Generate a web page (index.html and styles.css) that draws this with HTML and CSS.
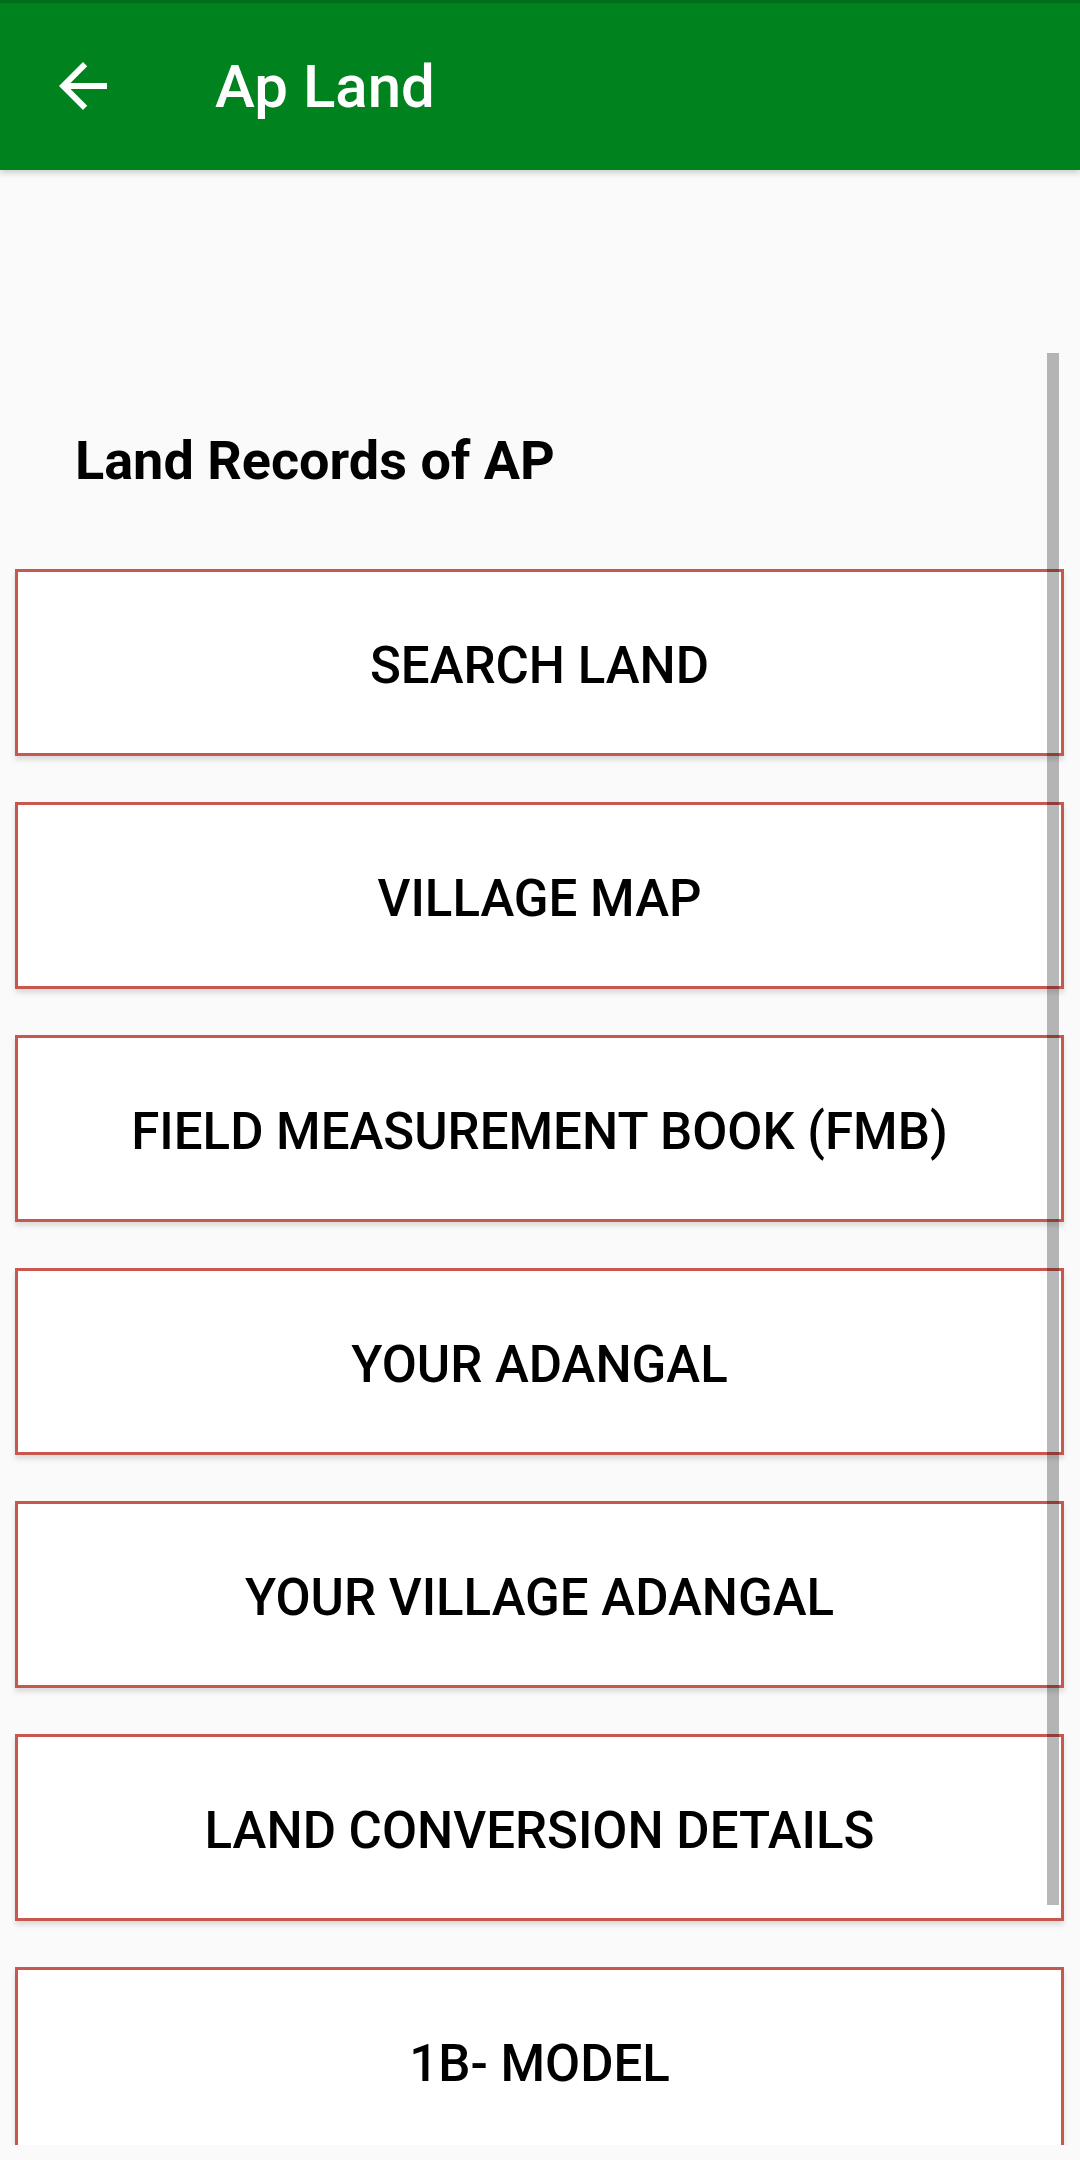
FILE: index.html
```html
<!DOCTYPE html>
<html>
<head>
<meta charset="utf-8">
<link rel="stylesheet" href="styles.css">
</head>
<body>
<div class="screen">
  <header class="appbar">
    <svg class="back" viewBox="0 0 24 24" width="72" height="72"><path fill="#fff" d="M20 11H7.83l5.59-5.59L12 4l-8 8 8 8 1.41-1.41L7.83 13H20v-2z"/></svg>
    <h1 class="title">Ap Land</h1>
  </header>
  <main class="content">
    <h2 class="heading">Land Records of AP</h2>
    <div class="list">
      <button class="item">SEARCH LAND</button>
      <button class="item">VILLAGE MAP</button>
      <button class="item">FIELD MEASUREMENT BOOK (FMB)</button>
      <button class="item">YOUR ADANGAL</button>
      <button class="item">YOUR VILLAGE ADANGAL</button>
      <button class="item">LAND CONVERSION DETAILS</button>
      <button class="item">1B- MODEL</button>
    </div>
    <div class="scrollbar"></div>
  </main>
</div>
</body>
</html>
```

FILE: styles.css
```css
html, body {
  margin: 0;
  padding: 0;
  background: #fafafa;
}
body {
  width: 1080px;
  height: 2160px;
  overflow: hidden;
  font-family: Roboto, "Liberation Sans", Arial, sans-serif;
}
.screen {
  width: 1080px;
  height: 2160px;
  display: flex;
  flex-direction: column;
}
.appbar {
  height: 167px;
  border-top: 3px solid #006d1a;
  background: #00821f;
  display: flex;
  align-items: center;
  box-shadow: 0 3px 6px rgba(0, 0, 0, 0.18);
  position: relative;
  z-index: 2;
  flex-shrink: 0;
}
.back {
  margin-left: 47px;
  margin-top: -2px;
  display: block;
}
.title {
  margin: 0 0 0 96px;
  color: #fff;
  font-size: 60px;
  font-weight: 500;
  line-height: 1;
  margin-top: 0;
}
.content {
  position: relative;
  height: 1975px;
  overflow: hidden;
  flex-shrink: 0;
}
.heading {
  margin: 259px 0 0 75px;
  font-size: 54px;
  font-weight: 700;
  color: #000;
  line-height: normal;
}
.list {
  margin-top: 77px;
  padding: 0 16px 0 15px;
  display: flex;
  flex-direction: column;
  gap: 46px;
}
.item {
  height: 187px;
  background: #fff;
  border: 3px solid #c8574f;
  box-shadow: 0 4px 5px rgba(0, 0, 0, 0.12);
  font-family: Roboto, "Liberation Sans", Arial, sans-serif;
  font-size: 51px;
  font-weight: 500;
  color: #000;
  display: flex;
  align-items: center;
  justify-content: center;
  padding: 5px 0 0 0;
  flex-shrink: 0;
}
.scrollbar {
  position: absolute;
  left: 1047px;
  top: 183px;
  width: 12px;
  height: 1552px;
  background: rgba(0, 0, 0, 0.28);
}
```
